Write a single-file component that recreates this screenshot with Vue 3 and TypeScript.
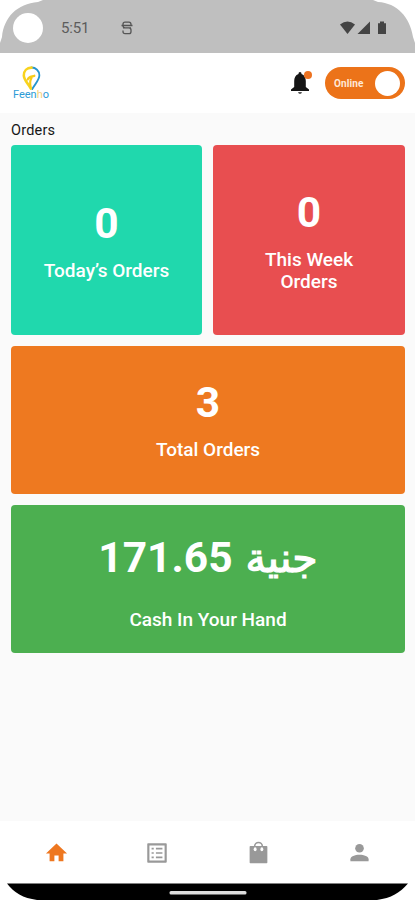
<script setup lang="ts">
interface Tile {
  value: string
  unit?: string
  label: string
  tone: string
}

const tiles: Tile[] = [
  { value: '0', label: 'Today’s Orders', tone: 'teal' },
  { value: '0', label: 'This Week Orders', tone: 'red' },
  { value: '3', label: 'Total Orders', tone: 'orange' },
  { value: '171.65', unit: 'جنية', label: 'Cash In Your Hand', tone: 'green' },
]
</script>

<template>
  <div class="screen">
    <div class="status">
      <svg class="status-bg" viewBox="0 0 415 53" preserveAspectRatio="none">
        <path d="M0 53V43L2 37C4 17 17 4 38 2L43 0H373L378 2C397 3 410 17 413 37L415 43V53Z" fill="#bfbfbf" />
      </svg>
      <span class="camera"></span>
      <span class="time">5:51</span>
      <svg class="debug" viewBox="0 0 12 14" fill="none" stroke="#555" stroke-width="1.3">
        <path d="M10 4.500V3.500Q10 1.200 8 1.200H4Q2 1.200 2 3.200V4.500Q2 6.800 4 6.800H8Q10 6.800 10 9V10.500Q10 12.700 8 12.700H4Q2 12.700 2 10.500V9.500M.5 4.500H11.500M2 6.800H10" />
      </svg>
      <svg class="signals" viewBox="0 0 47 14" fill="#444">
        <path d="M0 3.500Q7.500-2.500 15 3.500L7.500 13Z" />
        <path d="M30 .5V13H17.500Z" />
        <path d="M38 2.200H40V.5H44V2.200H46V13H38Z" />
      </svg>
    </div>

    <header class="header">
      <div class="logo">
        <svg class="pin" viewBox="0 0 20 25" preserveAspectRatio="none" fill="none" stroke-linecap="round">
          <path d="M10 1.500C14.500 1.500 18.300 4.800 18.300 9.300C18.300 14 14 17.500 10.800 23" stroke="#2695cf" stroke-width="1.900" />
          <path d="M10 1.700C5 1.700 1.900 5 1.900 9.500C1.900 14 6.500 17.500 9.300 22.500" stroke="#f8d31d" stroke-width="2.700" />
          <path d="M6 13.500C7 10.500 9.500 10.800 13 9.800M9 21C8.200 17 8.200 14.500 10 12" stroke="#f8cc19" stroke-width="2.300" />
        </svg>
        <span class="brand">Feen<b>h</b>o</span>
      </div>
      <div class="bell">
        <svg viewBox="0 0 18 23">
          <path d="M9 0C10 0 10.500.8 10.500 1.900C13.500 3 14.800 5.500 14.800 9V15L18 17.500V19H0V17.500L3.200 15V9C3.200 5.500 4.500 3 7.500 1.900C7.500.8 8 0 9 0Z" fill="#151515" />
          <path d="M7 20H11Q10.500 22 9 22T7 20Z" fill="#555" />
        </svg>
        <span class="dot"></span>
      </div>
      <div class="toggle"><span>Online</span><i></i></div>
    </header>

    <main class="content">
      <h1>Orders</h1>
      <div class="grid">
        <section v-for="tile in tiles" :key="tile.label" class="tile" :class="tile.tone">
          <div class="value"><span>{{ tile.value }}</span><span v-if="tile.unit" class="unit">{{ tile.unit }}</span></div>
          <div class="label">{{ tile.label }}</div>
        </section>
      </div>
    </main>

    <nav class="nav">
      <div class="tab">
        <svg viewBox="0 0 24 24" fill="#ee7720"><path d="M9.800 21v-6h4.400v6h5v-8H23L12 2.500 1 13h3.800v8z" /></svg>
      </div>
      <div class="tab">
        <svg class="list" viewBox="0 0 24 24" fill="#999"><path d="M19 5v14H5V5h14m1.100-2H3.900c-.5 0-.9.4-.9.900v16.200c0 .4.400.900.900.900h16.200c.4 0 .900-.5.900-.900V3.900c0-.5-.5-.900-.9-.900zM11 7.200h6v1.600h-6zm0 4h6v1.600h-6zm0 4h6v1.600h-6zM7 7.200h2v1.600H7zm0 4h2v1.600H7zm0 4h2v1.600H7z" /></svg>
      </div>
      <div class="tab">
        <svg viewBox="0 0 24 24" fill="none">
          <path d="M3.500 6H20.500V22.500H3.500Z" fill="#999" stroke="#999" stroke-width="1.500" stroke-linejoin="round" />
          <path d="M8 7V5.500a4 4 0 0 1 8 0V7" stroke="#999" stroke-width="1.600" />
          <path d="M9.700 5.300a2.300 2.300 0 0 1 4.600 0Z" fill="#fff" />
          <ellipse cx="8.500" cy="8.500" rx="1.500" ry="2.100" fill="#fff" />
          <ellipse cx="15.500" cy="8.500" rx="1.500" ry="2.100" fill="#fff" />
        </svg>
      </div>
      <div class="tab">
        <svg viewBox="0 0 24 24" fill="#999"><circle cx="12" cy="7.500" r="4.500" /><path d="M2.500 21V19C2.500 12.700 21.500 12.700 21.500 19V21Z" /></svg>
      </div>
    </nav>

    <footer class="gesture">
      <svg viewBox="0 0 415 17">
        <path d="M7 .5H408C400 10 391 15 377 17H37C23 15 14 10 7 .5Z" fill="#000" />
        <rect x="169.500" y="8" width="77" height="3.500" rx="1.500" fill="#ddd" />
      </svg>
    </footer>
  </div>
</template>

<style>
body {
  margin: 0;
  background: #fff;
}
</style>

<style scoped>
.screen {
  width: 415px;
  height: 900px;
  overflow: hidden;
  display: flex;
  flex-direction: column;
  background: #fff;
  font-family: Roboto, 'DejaVu Sans', sans-serif;
}
svg {
  display: block;
}
.status {
  position: relative;
  height: 53px;
  flex: none;
  display: flex;
  align-items: center;
  box-sizing: border-box;
  padding: 2px 28px 0 13px;
}
.status > * {
  position: relative;
}
.status .status-bg {
  position: absolute;
  inset: 0;
  width: 415px;
  height: 53px;
}
.camera {
  width: 30px;
  height: 30px;
  border-radius: 50%;
  background: #fff;
}
.time {
  width: 60px;
  margin-left: 18px;
  color: #5c5c5c;
  font-size: 15px;
  line-height: 18px;
  letter-spacing: -0.2px;
}
.debug {
  width: 12px;
  height: 14px;
}
.signals {
  width: 47px;
  height: 14px;
  margin-left: auto;
}
.header {
  height: 60px;
  flex: none;
  display: flex;
  align-items: center;
  box-sizing: border-box;
  padding: 0 10px 0 13px;
}
.logo {
  width: 36px;
  display: flex;
  flex-direction: column;
  align-items: center;
}
.pin {
  width: 19px;
  height: 25px;
}
.brand {
  height: 11px;
  margin-top: -2px;
  color: #2c9bd6;
  font: 400 11px/11px Roboto, sans-serif;
  letter-spacing: 0;
}
.brand b {
  color: #f5cf79;
  font-weight: 400;
}
.bell {
  position: relative;
  width: 18px;
  height: 23px;
  margin: 0 16px 0 auto;
}
.dot {
  position: absolute;
  left: 13px;
  top: -1px;
  width: 8px;
  height: 8px;
  border-radius: 50%;
  background: #ed7220;
}
.toggle {
  width: 80px;
  height: 32px;
  box-sizing: border-box;
  padding: 0 5px 0 9px;
  display: flex;
  align-items: center;
  justify-content: space-between;
  border-radius: 16px;
  background: #ec7319;
  color: #ffe9d8;
  font-size: 10px;
  font-weight: 700;
  letter-spacing: 0.1px;
}
.toggle i {
  width: 25px;
  height: 25px;
  border-radius: 50%;
  background: #fff;
}
.content {
  flex: 1;
  padding: 9px 10px 0 11px;
  background: #fafafa;
}
h1 {
  margin: 0 0 5px;
  color: #161616;
  font-size: 14.5px;
  font-weight: 400;
  line-height: 18px;
  letter-spacing: 0.2px;
}
.grid {
  display: grid;
  grid-template-columns: 191px 192px;
  grid-template-rows: 190px 147.500px 148px;
  column-gap: 11px;
  row-gap: 11px;
}
.tile {
  display: flex;
  flex-direction: column;
  align-items: center;
  justify-content: center;
  box-sizing: border-box;
  border-radius: 4px;
  color: #fff;
  text-align: center;
}
.teal {
  background: #20d8ad;
}
.red {
  background: #e84e50;
}
.orange {
  grid-column: 1 / -1;
  background: #ee7920;
}
.green {
  grid-column: 1 / -1;
  padding-top: 6px;
  background: #4caf50;
}
.value {
  display: flex;
  align-items: baseline;
  gap: 13px;
  height: 50px;
  margin-bottom: 11px;
  font-size: 42.5px;
  font-weight: 700;
  line-height: 50px;
  white-space: nowrap;
}
.unit {
  font-family: 'DejaVu Sans', sans-serif;
  font-size: 41px;
  font-weight: 400;
  -webkit-text-stroke: 1.2px #fff;
}
.label {
  max-width: 130px;
  font-size: 19px;
  font-weight: 500;
  line-height: 22px;
}
.green .label,
.orange .label {
  max-width: none;
}
.green .value {
  margin-bottom: 26px;
}
.nav {
  height: 62px;
  flex: none;
  display: grid;
  grid-template-columns: repeat(4, 101px);
  justify-content: center;
  align-items: center;
  padding-top: 1px;
  box-sizing: border-box;
  background: #fff;
}
.tab {
  display: flex;
  justify-content: center;
}
.tab svg {
  width: 23px;
  height: 23px;
}
.tab .list {
  width: 26px;
  height: 26px;
}
.gesture {
  height: 17px;
  flex: none;
}
</style>
